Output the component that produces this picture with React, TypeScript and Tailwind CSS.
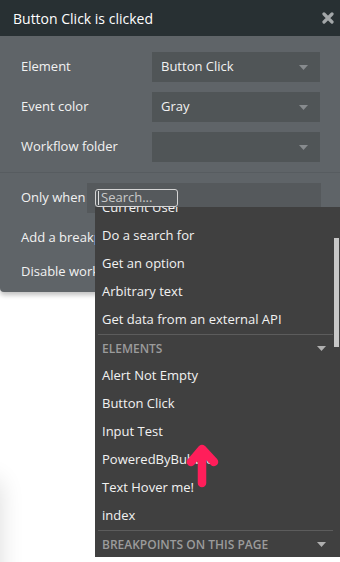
import React from 'react'

const font = { fontFamily: '"Open Sans", "Noto Sans", sans-serif' }

const Caret = ({ className = '' }: { className?: string }) => (
  <svg width="9" height="5" viewBox="0 0 9 5" className={className}>
    <path d="M0 0 H9 L4.5 5 Z" fill="currentColor" />
  </svg>
)

const SelectBox = ({ value }: { value?: string }) => (
  <div className="flex h-[30px] w-[168px] items-center justify-between bg-[#505557] pl-[9px] pr-[12px] text-[13px] text-[#f2f2f2]">
    <span>{value}</span>
    <Caret className="text-[#878b8e]" />
  </div>
)

const Row = ({ label, value }: { label: string; value?: string }) => (
  <div className="flex items-center justify-between pl-[21px] pr-[20px]">
    <span className="text-[13px] text-[#f2f2f2]">{label}</span>
    <SelectBox value={value} />
  </div>
)

const Item = ({ text }: { text: string }) => (
  <div className="flex h-[28px] items-center pl-[7px] text-[13px] text-[#f2f2f2]">{text}</div>
)

const Section = ({ text }: { text: string }) => (
  <div className="flex h-[27px] items-center justify-between pl-[7px] pr-[14px] text-[12px] font-semibold text-[#9b9b9b]">
    <span>{text}</span>
    <Caret className="text-[#b0b0b0]" />
  </div>
)

export default function App() {
  return (
    <div className="relative h-[562px] w-[340px] overflow-hidden bg-white" style={font}>
      <div className="pointer-events-none absolute left-[-30px] top-[480px] h-[200px] w-[30px] rounded-[8px] shadow-[0_0_24px_rgba(0,0,0,0.14)]" />

      {/* workflow panel */}
      <div className="relative rounded-b-[4px] bg-[#5f6468] shadow-[0_3px_5px_rgba(0,0,0,0.25)]">
        <div className="flex h-[36px] items-center justify-between bg-[#283033] pl-[13px] pr-[6px]">
          <span className="text-[14px] text-white">Button Click is clicked</span>
          <svg width="12" height="12" viewBox="0 0 12 12">
            <path d="M2 2 L10 10 M10 2 L2 10" stroke="#a3a7a9" strokeWidth="3.2" strokeLinecap="round" />
          </svg>
        </div>

        <div className="flex flex-col gap-[10px] pt-[16px]">
          <Row label="Element" value="Button Click" />
          <Row label="Event color" value="Gray" />
          <Row label="Workflow folder" />
        </div>

        <div className="mt-[10px] h-px bg-[#575c60]" />

        <div className="mt-[10px] flex items-center pl-[21px] pr-[19px]">
          <span className="w-[66px] text-[13px] text-[#f2f2f2]">Only when</span>
          <div className="flex h-[30px] flex-1 items-center bg-[#55595c] pl-[8px]">
            <div className="flex h-[18px] w-[83px] items-center rounded-[3px] border border-[#d4d4d4] pl-[2px] text-[13px] text-[#c9c9c9]">
              <span className="mr-[2px] h-[14px] w-px bg-[#e0e0e0]" />
              Search...
            </div>
          </div>
        </div>

        <div className="mt-[8px] flex h-[34px] items-center pl-[21px] text-[13px] text-[#f2f2f2]">Add a breakpoint in debug mode</div>
        <div className="flex h-[34px] items-center pl-[21px] text-[13px] text-[#f2f2f2]">Disable workflow</div>
        <div className="h-[3px]" />
      </div>

      {/* dropdown */}
      <div className="absolute left-[95px] top-[207px] h-[350px] w-[245px] overflow-hidden bg-[#404040]">
        <div className="mt-[-13px]">
          <Item text="Current User" />
          <Item text="Do a search for" />
          <Item text="Get an option" />
          <Item text="Arbitrary text" />
          <Item text="Get data from an external API" />
          <div className="ml-[3px] mr-[7px] h-px bg-[#5c5c5c]" />
          <Section text="ELEMENTS" />
          <Item text="Alert Not Empty" />
          <Item text="Button Click" />
          <Item text="Input Test" />
          <Item text="PoweredByBubble" />
          <Item text="Text Hover me!" />
          <Item text="index" />
          <div className="ml-[3px] mr-[7px] h-px bg-[#5c5c5c]" />
          <Section text="BREAKPOINTS ON THIS PAGE" />
        </div>
        <div className="absolute right-[1px] top-[31px] h-[109px] w-[5px] bg-[#c8c8c8]" />
      </div>

      {/* pink arrow */}
      <svg className="absolute left-[184px] top-[443px]" width="38" height="46" viewBox="0 0 38 46">
        <path d="M18 40 V7 M7 19 L18 6 L30 19" stroke="#ff1e5a" strokeWidth="8.5" strokeLinecap="round" strokeLinejoin="round" fill="none" />
      </svg>
    </div>
  )
}
